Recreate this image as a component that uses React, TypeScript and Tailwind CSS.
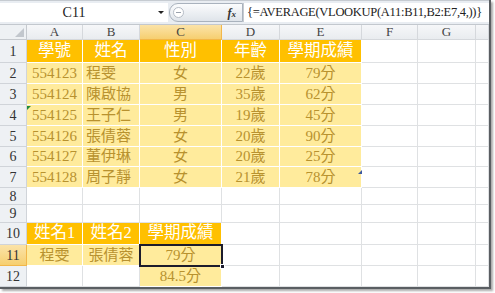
import React from 'react'

const COLS = ['A', 'B', 'C', 'D', 'E', 'F', 'G', '']
const ROW_H = [23, 21, 21, 21, 21, 20, 21, 17, 18, 22, 21, 21]

type Kind = 'head' | 'data' | 'empty'
type Cell = { t?: string; k: Kind; align?: 'left' | 'center' }

const E: Cell = { k: 'empty' }
const h = (t: string): Cell => ({ t, k: 'head' })
const d = (t: string, align: 'left' | 'center' = 'center'): Cell => ({ t, k: 'data', align })

const people = [
  ['554123', '程雯', '女', '22歲', '79分'],
  ['554124', '陳啟協', '男', '35歲', '62分'],
  ['554125', '王子仁', '男', '19歲', '45分'],
  ['554126', '張倩蓉', '女', '20歲', '90分'],
  ['554127', '董伊琳', '女', '20歲', '25分'],
  ['554128', '周子靜', '女', '21歲', '78分'],
]

const sheet: Cell[][] = [
  [h('學號'), h('姓名'), h('性別'), h('年齡'), h('學期成績'), E, E, E],
  ...people.map((p) => [d(p[0]), d(p[1], 'left'), d(p[2]), d(p[3]), d(p[4]), E, E, E]),
  [E, E, E, E, E, E, E, E],
  [E, E, E, E, E, E, E, E],
  [h('姓名1'), h('姓名2'), h('學期成績'), E, E, E, E, E],
  [d('程雯'), d('張倩蓉'), d('79分'), E, E, E, E, E],
  [E, E, d('84.5分'), E, E, E, E, E],
]

const font = { fontFamily: '"Liberation Serif", "Noto Sans CJK TC", serif' }

function FormulaBar() {
  return (
    <div className="flex h-[22px] border-t border-[#c6cbd1] bg-[#e9edf2] pt-[2px]">
      <div className="relative flex w-[168px] shrink-0 items-center justify-center bg-white text-[14px] text-[#222]">
        <span className="-ml-[20px]">C11</span>
        <span className="absolute right-[4px] top-[8px] h-0 w-0 border-x-[3px] border-t-[3px] border-x-transparent border-t-[#222]" />
      </div>
      <div className="ml-[1px] flex w-[74px] shrink-0 items-center rounded-l-[9px] border border-[#a9b2bd] bg-gradient-to-b from-[#fbfcfd] to-[#dfe4ea]">
        <span className="ml-[3px] flex h-[11px] w-[11px] items-center justify-center rounded-full border border-[#b5bcc5] bg-white">
          <span className="h-[1px] w-[5px] bg-[#9aa2ad]" />
        </span>
        <span className="ml-auto mr-[6px] text-[12px] font-bold italic text-[#333]">f<span className="text-[9px]">x</span></span>
      </div>
      <div className="flex min-w-0 flex-1 items-center overflow-hidden whitespace-nowrap border-l border-[#c6cbd1] bg-white pl-[3px] text-[12.5px] tracking-[-0.3px] text-[#222]">
        {'{=AVERAGE(VLOOKUP(A11:B11,B2:E7,4,))}'}
      </div>
    </div>
  )
}

export default function App() {
  return (
    <div className="h-[293px] w-[495px] bg-white" style={font}>
      <div className="w-[491px] border-b-2 border-r-2 border-[#5a5e62] shadow-[2px_2px_2px_#aaa]">
        <FormulaBar />
        <div className="h-[3px] border-b border-[#c3c8ce] bg-[#e9edf2]" />
        <div className="relative grid grid-cols-[27px_56px_57px_82px_58px_82px_56px_58px_13px]">
          {/* column headers */}
          <div className="relative h-[15px] border-b border-r border-[#c5c9ce] bg-[#eef1f4]">
            <span className="absolute bottom-[2px] right-[2px] h-0 w-0 border-b-[9px] border-l-[9px] border-l-transparent border-b-[#c2c7cd]" />
          </div>
          {COLS.map((c, i) => (
            <div
              key={i}
              className={
                c === 'C'
                  ? 'flex h-[15px] items-center justify-center border-b border-r border-[#f2b74a] bg-gradient-to-b from-[#fbe3a8] to-[#f6cf6f] text-[13px] text-[#444]'
                  : 'flex h-[15px] items-center justify-center border-b border-r border-[#d5d8dc] bg-gradient-to-b from-[#f6f7f9] to-[#e9ecef] text-[13px] text-[#444]'
              }
            >
              {c}
            </div>
          ))}
          {sheet.map((row, r) => (
            <React.Fragment key={r}>
              <div
                style={{ height: ROW_H[r] }}
                className={
                  r === 10
                    ? 'flex items-center justify-center border-b border-r border-[#f2b74a] bg-gradient-to-b from-[#fbe3a8] to-[#f6cf6f] text-[14px] text-[#333]'
                    : 'flex items-center justify-center border-b border-r border-[#d0d4d9] bg-[#eef1f4] text-[14px] text-[#333]'
                }
              >
                {r + 1}
              </div>
              {row.map((cell, c) => (
                <div
                  key={c}
                  style={{ height: ROW_H[r] }}
                  className={
                    cell.k === 'head'
                      ? 'flex items-center justify-center overflow-hidden whitespace-nowrap border-b border-r border-white bg-[#ffc000] text-[16.5px] text-white'
                      : cell.k === 'data'
                        ? cell.align === 'left'
                          ? 'flex items-center justify-start overflow-hidden whitespace-nowrap border-b border-r border-white bg-[#ffeb9c] pl-[3px] text-[15px] text-[#b8922f]'
                          : 'flex items-center justify-center overflow-hidden whitespace-nowrap border-b border-r border-white bg-[#ffeb9c] text-[15px] text-[#b8922f]'
                        : 'border-b border-r border-[#dfe1e3] bg-white'
                  }
                >
                  {cell.t}
                </div>
              ))}
            </React.Fragment>
          ))}
          {/* error indicator on A4 */}
          <span className="absolute left-[27px] top-[81px] h-0 w-0 border-r-[4px] border-t-[4px] border-r-transparent border-t-[#1f8a3c]" />
          {/* table resize handle E7 */}
          <span className="absolute left-[358px] top-[145px] h-0 w-0 border-b-[4px] border-l-[4px] border-l-transparent border-b-[#3e5a9e]" />
          {/* selection on C11 */}
          <span className="pointer-events-none absolute left-[139px] top-[219px] h-[23px] w-[84px] border-2 border-[#1c1c2c]" />
          <span className="absolute left-[220px] top-[239px] h-[5px] w-[5px] border border-white bg-[#1c1c2c]" />
        </div>
      </div>
    </div>
  )
}
